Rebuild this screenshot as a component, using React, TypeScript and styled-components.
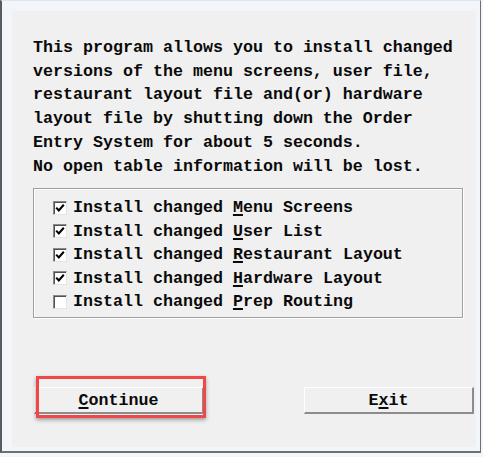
import { ReactElement } from 'react';
import styled, { createGlobalStyle } from 'styled-components';

/** Global */
const GlobalStyle = createGlobalStyle`
    html, body {
        margin: 0;
        padding: 0;
        background: #f4f6f9;
    }
    * {
        box-sizing: border-box;
    }
`;

/** Styled Components */
const Screen = styled.div`
    width: 483px;
    height: 457px;
    padding: 0 2px 4px 0;
    background: #f4f6f9;
`;

const Window = styled.div`
    height: 100%;
    border-top: 1px solid #dfe5ec;
    border-left: 2px solid #565b62;
    border-right: 1px solid #6b7077;
    border-bottom: 2px solid #6b7077;
    background: #f2f6fb;
    padding: 10px 4px 4px 10px;
`;

const Panel = styled.div`
    height: 100%;
    background: #f0f0f0;
    display: flex;
    flex-direction: column;
    padding: 25px 2px 33px 21px;
    font-family: 'Liberation Mono', 'Courier New', monospace;
    font-weight: 700;
    font-size: 16.67px;
    color: #0a0a0a;
`;

const Intro = styled.p`
    margin: 0;
    line-height: 23.7px;
    white-space: pre;
`;

const GroupBox = styled.div`
    margin-top: 10px;
    width: 430px;
    border: 1px solid #a0a0a0;
    box-shadow: inset 1px 1px 0 #ffffff, 1px 1px 0 #ffffff;
    padding: 7px 0 3px 19px;
`;

const Row = styled.label`
    display: flex;
    align-items: center;
    height: 23.5px;
    white-space: pre;
`;

const Box = styled.span`
    width: 14px;
    height: 14px;
    margin-right: 6px;
    flex: none;
    display: flex;
    align-items: center;
    justify-content: center;
    background: #ffffff;
    border-top: 1px solid #8a8a8a;
    border-left: 1px solid #8a8a8a;
    border-right: 1px solid #e4e4e4;
    border-bottom: 1px solid #e4e4e4;
    box-shadow: inset 1px 1px 0 #505050;
`;

const Key = styled.span`
    text-decoration: underline;
    text-decoration-thickness: 2px;
    text-underline-offset: 2px;
`;

const ButtonRow = styled.div`
    margin-top: auto;
    display: flex;
    justify-content: space-between;
    padding-left: 1px;
`;

const ButtonWrap = styled.div`
    position: relative;
`;

const Button = styled.button`
    width: 170px;
    height: 27px;
    padding: 0;
    background: #f0f0f0;
    border-top: 1px solid #ffffff;
    border-left: 1px solid #ffffff;
    border-right: 2px solid #8c8c8c;
    border-bottom: 2px solid #8c8c8c;
    font: inherit;
    color: inherit;
    cursor: pointer;
`;

const Highlight = styled.div`
    position: absolute;
    left: 2px;
    top: -11px;
    width: 170px;
    height: 42px;
    border: 3px solid #f04848;
    box-shadow: 0 2px 4px rgba(0, 0, 0, 0.35);
    pointer-events: none;
`;

/** Data */
const intro = [
    'This program allows you to install changed',
    'versions of the menu screens, user file,',
    'restaurant layout file and(or) hardware',
    'layout file by shutting down the Order',
    'Entry System for about 5 seconds.',
    'No open table information will be lost.',
].join('\n');

const options = [
    { key: 'M', rest: 'enu Screens', checked: true },
    { key: 'U', rest: 'ser List', checked: true },
    { key: 'R', rest: 'estaurant Layout', checked: true },
    { key: 'H', rest: 'ardware Layout', checked: true },
    { key: 'P', rest: 'rep Routing', checked: false },
];

const Check = (): ReactElement => (
    <svg width="10" height="10" viewBox="0 0 10 10">
        <path
            d="M1.2 4.6 L3.8 7.4 L8.8 1.8"
            fill="none"
            stroke="#000"
            strokeWidth="2.1"
        />
    </svg>
);

/**
 * Install dialog
 */
const App = (): ReactElement => (
    <>
        <GlobalStyle />
        <Screen>
            <Window>
                <Panel>
                    <Intro>{intro}</Intro>
                    <GroupBox>
                        {options.map((o) => (
                            <Row key={o.key}>
                                <Box>{o.checked && <Check />}</Box>
                                {'Install changed '}
                                <Key>{o.key}</Key>
                                {o.rest}
                            </Row>
                        ))}
                    </GroupBox>
                    <ButtonRow>
                        <ButtonWrap>
                            <Button>
                                <Key>C</Key>ontinue
                            </Button>
                            <Highlight />
                        </ButtonWrap>
                        <Button>
                            E<Key>x</Key>it
                        </Button>
                    </ButtonRow>
                </Panel>
            </Window>
        </Screen>
    </>
);

export default App;
